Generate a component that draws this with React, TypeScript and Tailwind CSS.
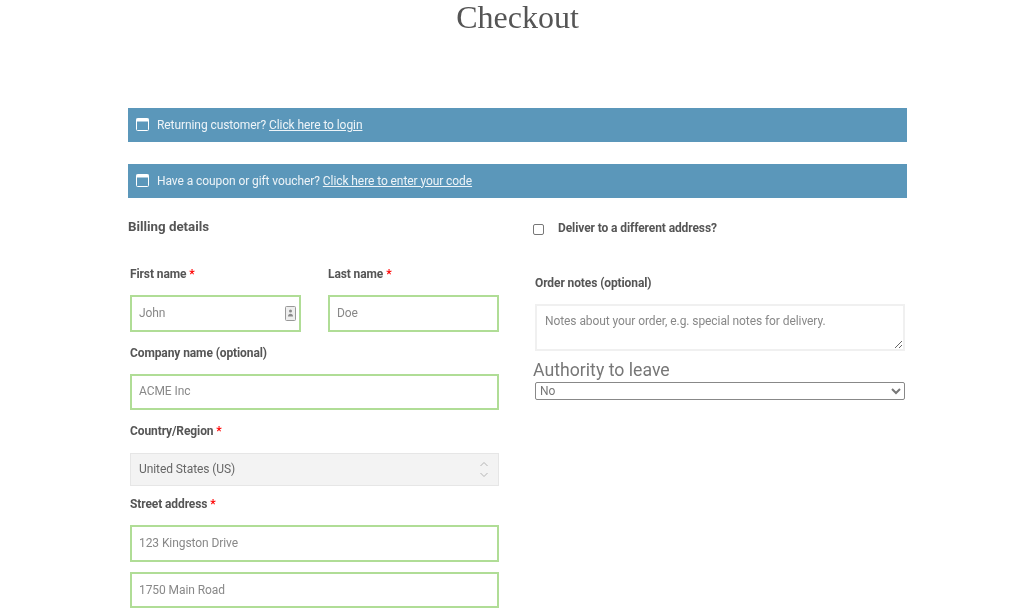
import React from 'react';

function WindowIcon() {
  return (
    <svg width="13" height="13" viewBox="0 0 13 13" className="mb-[2px] shrink-0" fill="none">
      <rect x="0.5" y="0.5" width="12" height="12" rx="1" stroke="#fff" strokeWidth="1" />
      <rect x="0.5" y="0.5" width="12" height="3" fill="#fff" />
    </svg>
  );
}

function Notice({ text, link, className }: { text: string; link: string; className: string }) {
  return (
    <div className={`flex h-[34px] items-center gap-[8px] bg-[#5b97ba] pl-[8px] text-[12px] tracking-[-0.08px] text-[#eef4f8] ${className}`}>
      <WindowIcon />
      <p className="pb-[1px]">
        {text} <a className="underline">{link}</a>
      </p>
    </div>
  );
}

function Label({ children, required, className = '' }: { children: React.ReactNode; required?: boolean; className?: string }) {
  return (
    <label className={`block h-[16px] text-[12px] leading-[16px] font-bold tracking-[-0.1px] text-[#555] ${className}`}>
      {children}
      {required && <span className="text-[#f00]"> *</span>}
    </label>
  );
}

function Field({ placeholder, className = 'h-[37px] pb-[1px]' }: { placeholder: string; className?: string }) {
  return (
    <input
      placeholder={placeholder}
      className={`block w-full border-2 border-[#b0dd96] bg-white px-[7px] text-[12px] tracking-[-0.08px] outline-none placeholder:text-[#888] ${className}`}
    />
  );
}

export default function App() {
  return (
    <div className="h-[615px] w-[1024px] overflow-hidden bg-white font-['Roboto',sans-serif] blur-[0.35px]">
      <h1 className="h-[36px] pb-[2px] pl-[11px] text-center font-['Liberation_Serif',serif] text-[32px] leading-[34px] text-[#555]">
        Checkout
      </h1>

      <div className="ml-[128px] w-[779px]">
        <Notice className="mt-[72px]" text="Returning customer?" link="Click here to login" />
        <Notice className="mt-[22px]" text="Have a coupon or gift voucher?" link="Click here to enter your code" />

        <div className="flex">
          {/* Billing */}
          <div className="w-[371px]">
            <h3 className="mt-[20px] h-[18px] text-[13.3px] leading-[18px] font-bold text-[#555]">Billing details</h3>
            <div className="ml-[2px]">
              <div className="mt-[30px] flex gap-[27px]">
                <div className="w-[171px]">
                  <Label required>First name</Label>
                  <div className="relative mt-[13px]">
                    <Field placeholder="John" />
                    <svg width="11" height="15" viewBox="0 0 11 15" className="absolute top-[11px] right-[5px]" fill="none">
                      <rect x="0.5" y="0.5" width="10" height="14" rx="1" fill="#eeeeee" stroke="#999999" />
                      <circle cx="5.5" cy="5" r="1.5" fill="#8a8a8a" />
                      <path d="M3 10.5c0-2 1-2.8 2.5-2.8s2.5.8 2.5 2.8z" fill="#8a8a8a" />
                    </svg>
                  </div>
                </div>
                <div className="w-[171px]">
                  <Label required>Last name</Label>
                  <Field placeholder="Doe" className="mt-[13px] h-[37px] pb-[1px]" />
                </div>
              </div>

              <Label className="mt-[13px]">Company name (optional)</Label>
              <Field placeholder="ACME Inc" className="mt-[13px] h-[36px] pb-[2px]" />

              <Label required className="mt-[13px]">Country/Region</Label>
              <div className="mt-[14px] flex h-[33px] items-center justify-between border border-[#e6e6e6] bg-[#f3f3f3] px-[8px] pb-[1px] text-[12px] tracking-[-0.08px] text-[#666]">
                <span>United States (US)</span>
                <svg width="10" height="17" viewBox="0 0 10 17" fill="none" stroke="#b5b5b5" strokeWidth="1" className="mr-[1px]">
                  <path d="M1.5 5 5 1.5 8.5 5" />
                  <path d="M1.5 12 5 15.5 8.5 12" />
                </svg>
              </div>

              <Label required className="mt-[10px]">Street address</Label>
              <Field placeholder="123 Kingston Drive" className="mt-[13px] h-[37px] pb-[1px]" />
              <Field placeholder="1750 Main Road" className="mt-[10px] h-[36px] pb-[1px]" />
            </div>
          </div>

          {/* Shipping + notes */}
          <div className="ml-[34px] w-[372px]">
            <div className="mt-[22px] flex h-[16px] items-start">
              <input type="checkbox" className="mt-[4px] h-[11px] w-[11px] appearance-none rounded-[2px] border border-[#777] bg-white" />
              <span className="ml-[14px] text-[12px] leading-[16px] font-bold tracking-[-0.1px] text-[#555]">Deliver to a different address?</span>
            </div>
            <div className="ml-[2px]">
              <Label className="mt-[39px]">Order notes (optional)</Label>
              <textarea
                placeholder="Notes about your order, e.g. special notes for delivery."
                className="mt-[13px] block h-[47px] w-[370px] border-2 border-[#f0f0f0] bg-white px-[8px] pt-[8px] pb-[7px] text-[12px] leading-[14px] tracking-[-0.08px] outline-none placeholder:text-[#888]"
              />
            </div>
            <p className="mt-[8px] h-[22px] text-[17.7px] leading-[22px] text-[#777]">Authority to leave</p>
            <select className="mt-[1px] ml-[2px] block h-[18px] w-[370px] rounded-[2px] border border-[#888] bg-white text-[12px] leading-[14px] text-[#777]">
              <option>No</option>
            </select>
          </div>
        </div>
      </div>
    </div>
  );
}
